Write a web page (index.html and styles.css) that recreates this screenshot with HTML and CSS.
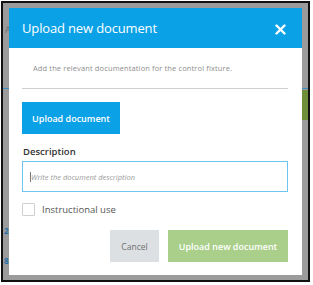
FILE: index.html
```html
<!DOCTYPE html>
<html>
<head>
<meta charset="utf-8">
<link rel="stylesheet" href="styles.css">
</head>
<body>
<div class="frame">
  <div class="backdrop">
    <div class="peek peek-a">A</div>
    <div class="peek peek-green"></div>
    <div class="peek peek-blue-l"></div>
    <div class="peek peek-blue-r"></div>
    <div class="peek peek-n1">2</div>
    <div class="peek peek-n2">8</div>
    <div class="modal">
      <div class="header">
        <h1 class="title">Upload new document</h1>
        <svg class="close" width="11" height="11" viewBox="0 0 11 11"><path d="M1.5 1.5 L9.5 9.5 M9.5 1.5 L1.5 9.5" stroke="#fff" stroke-width="2.4" stroke-linecap="round"/></svg>
      </div>
      <div class="body">
        <p class="intro">Add the relevant documentation for the control fixture.</p>
        <div class="rule"></div>
        <button class="btn btn-blue">Upload document</button>
        <label class="label">Description</label>
        <div class="input"><span class="caret"></span><span class="placeholder">Write the document description</span></div>
        <div class="check-row"><span class="checkbox"></span><span class="check-label">Instructional use</span></div>
        <div class="actions">
          <button class="btn btn-cancel">Cancel</button>
          <button class="btn btn-green">Upload new document</button>
        </div>
      </div>
    </div>
  </div>
</div>
</body>
</html>
```
FILE: styles.css
```css
* { box-sizing: border-box; }
html, body { margin: 0; padding: 0; background: #fff; }
body { font-family: "Open Sans", "DejaVu Sans", sans-serif; }
.frame {
  margin: 1px 0 0 1px;
  width: 309px;
  height: 281px;
  border: 2px solid #111;
}
.backdrop {
  position: relative;
  width: 100%;
  height: 100%;
  background: #9b9b9b;
  padding: 5px 6px 0 6px;
}
.peek { position: absolute; }
.peek-a { left: 2px; top: 20px; font-size: 9px; color: #6f6f6f; }
.peek-green { right: 0; top: 87px; width: 6px; height: 30px; background: #6f8f3a; }
.peek-blue-l { left: 0; top: 85px; width: 6px; height: 1px; background: #3c8fc4; }
.peek-blue-r { right: 0; top: 85px; width: 6px; height: 1px; background: #3c8fc4; }
.peek-n1 { left: 1px; top: 222px; font-size: 8px; color: #1f6fa8; font-weight: bold; }
.peek-n2 { left: 1px; top: 252px; font-size: 8px; color: #1f6fa8; font-weight: bold; }
.modal {
  position: relative;
  width: 293px;
  height: 267px;
  background: #fff;
}
.header {
  height: 40px;
  background: #0aa1e6;
  display: flex;
  align-items: center;
  justify-content: space-between;
  padding: 0 16px 0 13px;
}
.title {
  margin: 0;
  color: #fff;
  font-weight: 400;
  font-size: 13px;
  letter-spacing: -0.15px;
}
.close { display: block; margin-top: 2px; }
.body { padding: 0 14px 0 13px; }
.intro {
  margin: 0;
  padding: 15px 0 0 11px;
  height: 40px;
  font-size: 7.5px;
  color: #8e8e8e;
  letter-spacing: 0.12px;
}
.rule { height: 1px; background: #cfcfcf; }
.btn {
  border: 0;
  font-family: inherit;
  padding: 0;
  cursor: pointer;
}
.btn-blue {
  display: block;
  margin-top: 13px;
  width: 98px;
  height: 32px;
  background: #0aa1e6;
  color: #fff;
  font-size: 9px;
  font-weight: 600;
}
.label {
  display: block;
  margin-top: 11px;
  height: 16px;
  font-size: 9.5px;
  font-weight: 600;
  color: #333;
  padding-left: 1px;
}
.input {
  height: 31px;
  border: 1px solid #6ec5ef;
  display: flex;
  align-items: center;
  padding-left: 7px;
}
.caret { width: 1px; height: 10px; background: #777; }
.placeholder {
  font-size: 7.5px;
  font-style: italic;
  color: #9a9a9a;
}
.check-row {
  display: flex;
  align-items: center;
  margin-top: 11px;
  height: 13px;
}
.checkbox {
  width: 13px;
  height: 13px;
  border: 1px solid #cfcfcf;
  border-radius: 1px;
}
.check-label {
  margin-left: 7px;
  font-size: 9.5px;
  color: #555;
}
.actions {
  display: flex;
  justify-content: flex-end;
  gap: 9px;
  margin-top: 14px;
}
.btn-cancel {
  width: 49px;
  height: 32px;
  background: #dde0e3;
  color: #6e6e6e;
  font-size: 8.5px;
}
.btn-green {
  width: 120px;
  height: 32px;
  background: #a9cf8a;
  color: #fff;
  font-size: 9px;
  font-weight: 600;
}
```
